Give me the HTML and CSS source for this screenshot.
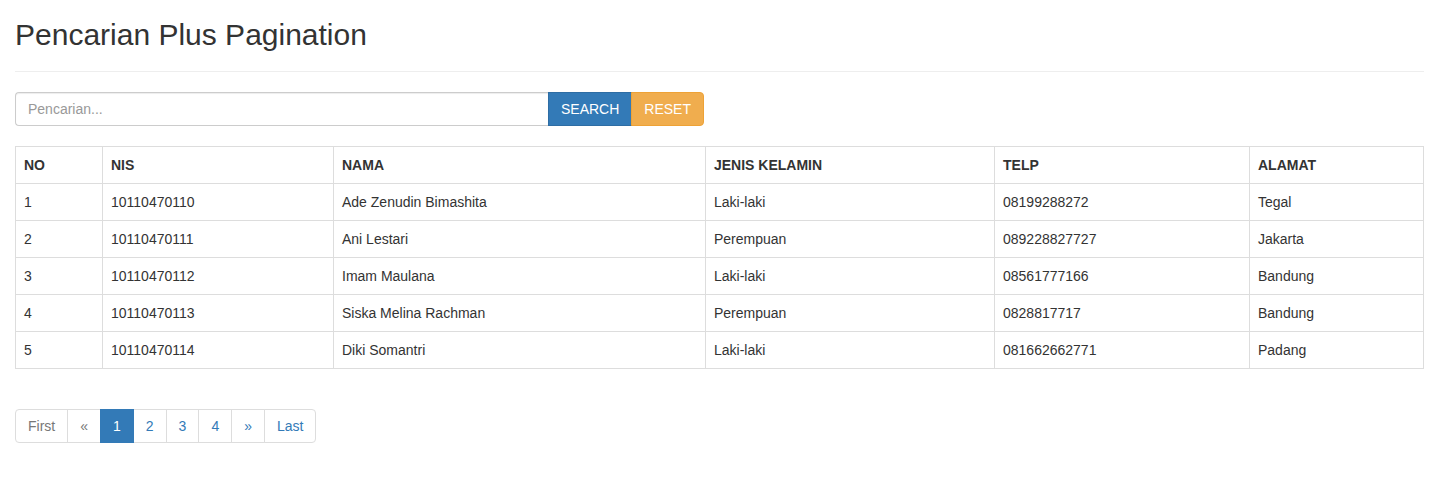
FILE: index.html
```html
<!DOCTYPE html>
<html>
<head>
<meta charset="utf-8">
<title>Pencarian Plus Pagination</title>
<link rel="stylesheet" href="styles.css">
</head>
<body>
<div class="container">
  <div class="page-header">
    <h2 class="title">Pencarian Plus Pagination</h2>
  </div>
  <form class="search-form">
    <div class="input-group">
      <input class="form-control" type="text" placeholder="Pencarian...">
      <button type="button" class="btn btn-primary">SEARCH</button>
      <button type="button" class="btn btn-warning">RESET</button>
    </div>
  </form>
  <table class="data-table">
    <colgroup>
      <col class="c-no"><col class="c-nis"><col class="c-nama"><col class="c-jk"><col class="c-telp"><col class="c-alamat">
    </colgroup>
    <thead>
      <tr><th>NO</th><th>NIS</th><th>NAMA</th><th>JENIS KELAMIN</th><th>TELP</th><th>ALAMAT</th></tr>
    </thead>
    <tbody>
      <tr><td>1</td><td>10110470110</td><td>Ade Zenudin Bimashita</td><td>Laki-laki</td><td>08199288272</td><td>Tegal</td></tr>
      <tr><td>2</td><td>10110470111</td><td>Ani Lestari</td><td>Perempuan</td><td>089228827727</td><td>Jakarta</td></tr>
      <tr><td>3</td><td>10110470112</td><td>Imam Maulana</td><td>Laki-laki</td><td>08561777166</td><td>Bandung</td></tr>
      <tr><td>4</td><td>10110470113</td><td>Siska Melina Rachman</td><td>Perempuan</td><td>0828817717</td><td>Bandung</td></tr>
      <tr><td>5</td><td>10110470114</td><td>Diki Somantri</td><td>Laki-laki</td><td>081662662771</td><td>Padang</td></tr>
    </tbody>
  </table>
  <ul class="pagination">
    <li class="disabled"><a>First</a></li>
    <li class="disabled"><a>&laquo;</a></li>
    <li class="active"><a>1</a></li>
    <li><a href="#">2</a></li>
    <li><a href="#">3</a></li>
    <li><a href="#">4</a></li>
    <li><a href="#">&raquo;</a></li>
    <li><a href="#">Last</a></li>
  </ul>
</div>
</body>
</html>
```

FILE: styles.css
```css
* { box-sizing: border-box; }
html, body { margin: 0; padding: 0; }
body {
  font-family: "Liberation Sans", Arial, Helvetica, sans-serif;
  font-size: 14px;
  line-height: 1.42857143;
  color: #333;
  background: #fff;
}
.container { padding: 0 15px; }
.page-header {
  padding-bottom: 10px;
  border-bottom: 1px solid #eee;
  margin-bottom: 20px;
}
.title {
  margin: 18px 0 10px;
  font-size: 30px;
  font-weight: 500;
  line-height: 1.1;
  color: #333;
}
.search-form { width: 689px; margin-bottom: 20px; }
.input-group { display: flex; }
.form-control {
  flex: 1;
  min-width: 0;
  height: 34px;
  padding: 6px 12px;
  font-family: inherit;
  font-size: 14px;
  color: #555;
  background: #fff;
  border: 1px solid #ccc;
  border-right: 0;
  border-radius: 4px 0 0 4px;
  box-shadow: inset 0 1px 1px rgba(0,0,0,.075);
  outline: none;
}
.form-control::placeholder { color: #999; }
.btn {
  height: 34px;
  padding: 6px 12px;
  font-family: inherit;
  font-size: 14px;
  line-height: 1.42857143;
  color: #fff;
  border: 1px solid transparent;
  border-radius: 0;
  cursor: pointer;
}
.btn-primary { background: #337ab7; border-color: #2e6da4; }
.btn-warning { background: #f0ad4e; border-color: #eea236; border-radius: 0 4px 4px 0; margin-left: -1px; }
.data-table {
  width: 100%;
  border-collapse: collapse;
  border-spacing: 0;
  margin-bottom: 20px;
  border: 1px solid #ddd;
}
.c-no { width: 87px; }
.c-nis { width: 231px; }
.c-nama { width: 372px; }
.c-jk { width: 289px; }
.c-telp { width: 255px; }
.data-table th, .data-table td {
  padding: 8px;
  border: 1px solid #ddd;
  text-align: left;
  vertical-align: top;
  line-height: 1.42857143;
}
.data-table thead th { font-weight: bold; }
.pagination {
  display: flex;
  list-style: none;
  padding: 0;
  margin: 40px 0 20px;
}
.pagination li a {
  display: block;
  padding: 6px 12px;
  line-height: 1.42857143;
  color: #337ab7;
  text-decoration: none;
  background: #fff;
  border: 1px solid #ddd;
  margin-left: -1px;
}
.pagination li:first-child a { margin-left: 0; border-radius: 4px 0 0 4px; }
.pagination li:last-child a { border-radius: 0 4px 4px 0; }
.pagination li.disabled a { color: #777; }
.pagination li.active a { color: #fff; background: #337ab7; border-color: #337ab7; position: relative; z-index: 2; }
```
